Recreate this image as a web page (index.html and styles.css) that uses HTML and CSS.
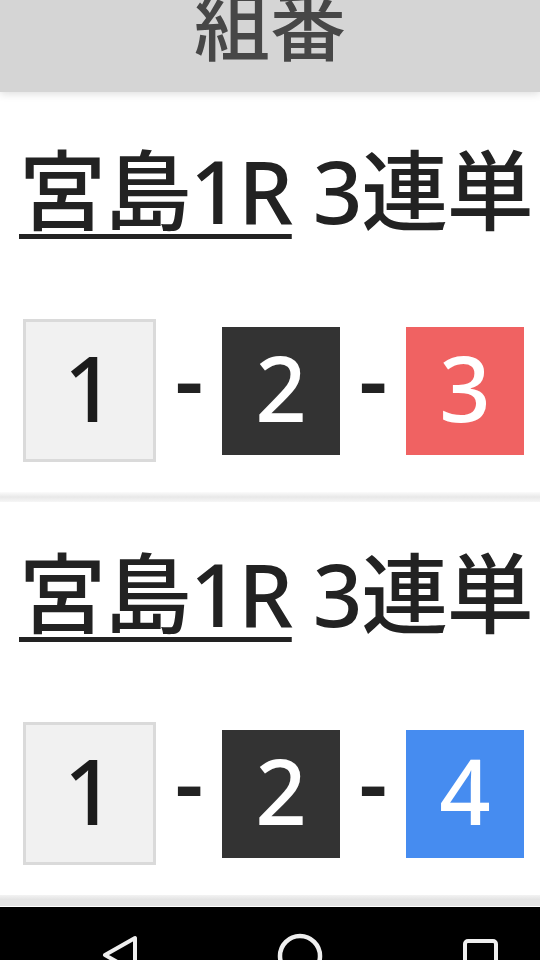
FILE: index.html
```html
<!DOCTYPE html>
<html lang="ja">
<head>
<meta charset="utf-8">
<title>組番</title>
<link rel="stylesheet" href="styles.css">
</head>
<body>
<header class="top">
  <h1 class="top-title">組番</h1>
</header>
<main class="list">
  <section class="card">
    <h2 class="race"><span class="race-link">宮島1R</span> 3連単</h2>
    <div class="combo">
      <span class="num num-1">1</span>
      <span class="dash">-</span>
      <span class="num num-2">2</span>
      <span class="dash">-</span>
      <span class="num num-3">3</span>
    </div>
  </section>
  <div class="sep"></div>
  <section class="card">
    <h2 class="race"><span class="race-link">宮島1R</span> 3連単</h2>
    <div class="combo">
      <span class="num num-1">1</span>
      <span class="dash">-</span>
      <span class="num num-2">2</span>
      <span class="dash">-</span>
      <span class="num num-4">4</span>
    </div>
  </section>
  <div class="sep-bottom"></div>
</main>
<nav class="navbar">
  <svg class="nav-back" width="36" height="50" viewBox="0 0 36 50"><path d="M33 7 L33 41 L3 24 Z" fill="none" stroke="#eeeeee" stroke-width="4" stroke-linejoin="round"/></svg>
  <svg class="nav-home" width="46" height="50" viewBox="0 0 46 50"><circle cx="23" cy="25" r="20" fill="none" stroke="#eeeeee" stroke-width="4.5"/></svg>
  <svg class="nav-recent" width="38" height="50" viewBox="0 0 38 50"><rect x="3" y="10" width="31" height="36" rx="3" fill="none" stroke="#eeeeee" stroke-width="4"/></svg>
</nav>
</body>
</html>
```
FILE: styles.css
```css
html, body {
  margin: 0;
  padding: 0;
  background: #ffffff;
}
body {
  width: 540px;
  height: 960px;
  overflow: hidden;
  font-family: "Noto Sans", "Noto Sans CJK JP", sans-serif;
  display: flex;
  flex-direction: column;
}
.top {
  height: 92px;
  background: #d5d5d5;
  overflow: hidden;
  box-shadow: 0 2px 8px rgba(0, 0, 0, 0.13);
  position: relative;
  z-index: 1;
  flex: none;
}
.top-title {
  margin: -12px 0 0 0;
  font-size: 76px;
  line-height: 1;
  font-weight: 500;
  text-align: center;
  color: #474747;
}
.list {
  flex: 1;
  padding-top: 7px;
  display: flex;
  flex-direction: column;
}
.card {
  height: 393px;
  box-sizing: border-box;
  padding: 48px 0 0 19px;
  flex: none;
}
.race {
  margin: 0;
  font-size: 87px;
  line-height: 1;
  font-weight: 500;
  color: #222222;
  white-space: nowrap;
  letter-spacing: -1.5px;
}
.race-link {
  text-decoration: underline;
  text-decoration-thickness: 5px;
  text-underline-offset: 10px;
}
.combo {
  margin-top: 85px;
  height: 143px;
  display: flex;
  align-items: center;
  padding-left: 4px;
}
.num {
  width: 118px;
  height: 128px;
  box-sizing: border-box;
  display: flex;
  align-items: center;
  justify-content: center;
  font-size: 90px;
  font-weight: 500;
  line-height: 1;
  padding-bottom: 8px;
  color: #ffffff;
}
.num-1 {
  width: 133px;
  height: 143px;
  background: #f1f1f1;
  border: 3px solid #dadada;
  color: #1c1c1c;
}
.num-2 { background: #333333; }
.num-3 { background: #f06262; }
.num-4 { background: #468cf0; }
.dash {
  width: 22px;
  margin: 0 22px;
  font-size: 88px;
  font-weight: 600;
  line-height: 1;
  padding-bottom: 26px;
  text-align: center;
  color: #222222;
  display: flex;
  justify-content: center;
}
.sep {
  height: 10px;
  flex: none;
  background: linear-gradient(to bottom, #fbfbfb, #e8e8e8 50%, #f6f6f6);
}
.sep-bottom {
  height: 11px;
  flex: none;
  background: linear-gradient(to bottom, #f3f3f3, #e4e4e4 40%, #e4e4e4);
}
.navbar {
  height: 53px;
  flex: none;
  background: #000000;
  overflow: hidden;
  display: flex;
  align-items: flex-start;
  padding: 24px 0 0 102px;
  box-sizing: border-box;
  gap: 139px;
}
.navbar svg {
  display: block;
  flex: none;
}
```
